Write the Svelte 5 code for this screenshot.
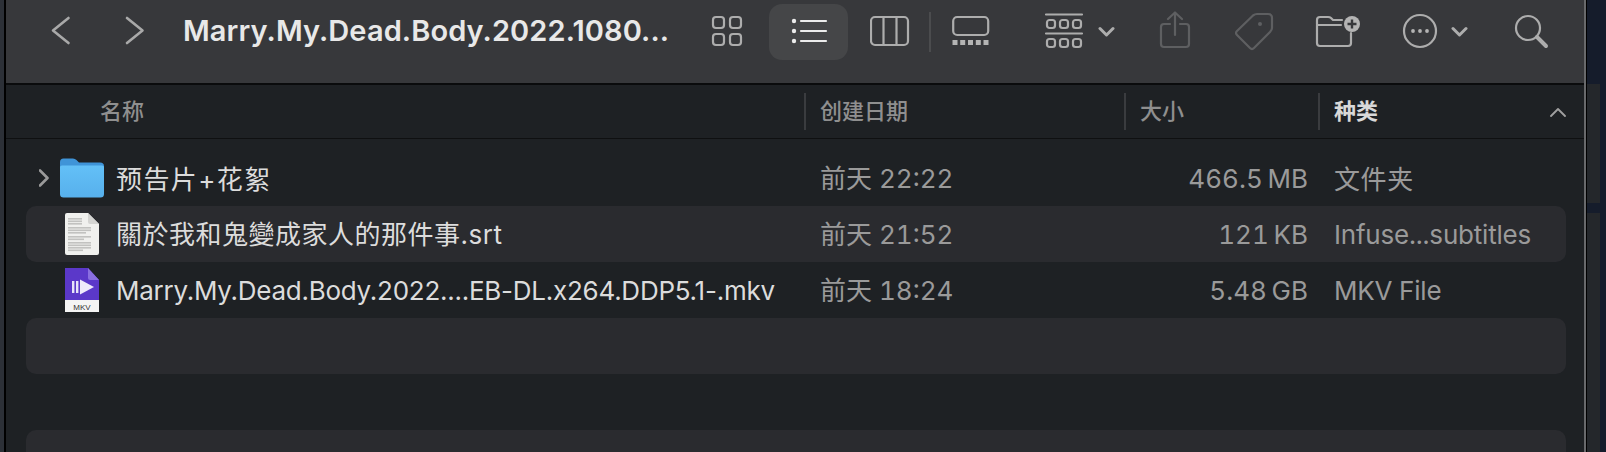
<script>
  const rows = [
    { kind: 'folder', name: '预告片+花絮', date: '前天 22:22', size: '466.5\u2009MB', type: '文件夹', cjk: true, spaced: true },
    { kind: 'doc', name: '關於我和鬼變成家人的那件事.srt', date: '前天 21:52', size: '121\u2009KB', type: 'Infuse...subtitles', tc: true },
    { kind: 'mkv', name: 'Marry.My.Dead.Body.2022....EB-DL.x264.DDP5.1-.mkv', date: '前天 18:24', size: '5.48\u2009GB', type: 'MKV File', latin: true },
    { kind: '' },
    { kind: '' },
    { kind: '' }
  ];
  const docLines = [
    [8, 6, 14], [8, 8.5, 14], [8, 11, 14],
    [8, 15, 23], [8, 17.5, 23], [8, 20, 18],
    [8, 24, 23], [8, 26.5, 16],
    [8, 30, 23], [8, 32.5, 23], [8, 35, 23], [8, 37.5, 15]
  ];
</script>

<div class="stage">
  <div class="rail-left"></div>
  <div class="window">
    <div class="toolbar">
      <svg class="back" width="22" height="40" viewBox="0 0 22 40"><path class="s nav" d="M18.5 7 L3 19.5 L18.5 32" /></svg>
      <svg class="forward" width="22" height="40" viewBox="0 0 22 40"><path class="s nav" d="M3 7 L18.5 19.5 L3 32" /></svg>
      <div class="title">Marry.My.Dead.Body.2022.1080...</div>

      <svg class="i-grid" width="32" height="40" viewBox="0 0 32 40">
        <rect class="s" x="2" y="6" width="11" height="11" rx="3" />
        <rect class="s" x="19" y="6" width="11" height="11" rx="3" />
        <rect class="s" x="2" y="23" width="11" height="11" rx="3" />
        <rect class="s" x="19" y="23" width="11" height="11" rx="3" />
      </svg>

      <div class="list-btn">
        <svg width="79" height="40" viewBox="0 0 79 40">
          <circle class="on-fill" cx="25" cy="10" r="2.2" />
          <circle class="on-fill" cx="25" cy="20" r="2.2" />
          <circle class="on-fill" cx="25" cy="30" r="2.2" />
          <path class="s on" d="M32 10 H57 M32 20 H57 M32 30 H57" />
        </svg>
      </div>

      <svg class="i-col" width="40" height="40" viewBox="0 0 40 40">
        <rect class="s" x="1" y="6" width="37" height="28" rx="4" />
        <path class="s" d="M13.5 6 V34 M26.5 6 V34" />
      </svg>
      <div class="tb-div"></div>
      <svg class="i-gal" width="40" height="40" viewBox="0 0 40 40">
        <rect class="s" x="1.2" y="6" width="35" height="18" rx="4" />
        <g class="fill">
          <rect x="0.5" y="29" width="5" height="5" />
          <rect x="8.2" y="29" width="5" height="5" />
          <rect x="16" y="29" width="5" height="5" />
          <rect x="23.8" y="29" width="5" height="5" />
          <rect x="31.5" y="29" width="5" height="5" />
        </g>
      </svg>
      <svg class="i-group" width="40" height="40" viewBox="0 0 40 40">
        <path class="s" d="M2 3.5 H38 M2 22.5 H38" />
        <rect class="s" x="3" y="9" width="8" height="8" rx="2.5" />
        <rect class="s" x="16" y="9" width="8" height="8" rx="2.5" />
        <rect class="s" x="29" y="9" width="8" height="8" rx="2.5" />
        <rect class="s" x="3" y="28" width="8" height="8" rx="2.5" />
        <rect class="s" x="16" y="28" width="8" height="8" rx="2.5" />
        <rect class="s" x="29" y="28" width="8" height="8" rx="2.5" />
      </svg>
      <svg class="i-chev1" width="18" height="40" viewBox="0 0 18 40"><path class="s thick" d="M2 17.5 L8.5 24 L15 17.5" /></svg>
      <svg class="i-share" width="34" height="40" viewBox="0 0 34 40">
        <path class="s off" d="M12 13 H6 a3 3 0 0 0 -3 3 V33 a3 3 0 0 0 3 3 H28 a3 3 0 0 0 3 -3 V16 a3 3 0 0 0 -3 -3 H22" />
        <path class="s off" d="M17 24 V2 M10 8 L17 1.5 L24 8" />
      </svg>
      <svg class="i-tag" width="40" height="40" viewBox="0 0 40 40">
        <path class="s off" d="M3 20 L19 4.5 Q21 3 23 3 L34 3 Q38 3 38 7 L38 17 Q38 19 36 21 L20 37 Q18 39 16 37 L3 24 Q1 22 3 20 Z" />
        <circle class="off-fill" cx="26" cy="13" r="2" />
      </svg>
      <svg class="i-new" width="47" height="40" viewBox="0 0 47 40">
        <path class="s" d="M2 14 V9 a3 3 0 0 1 3 -3 H13 q2 0 3 1 l2 2 H27 M2 14 H26 M2 14 V32 a3 3 0 0 0 3 3 H33 a3 3 0 0 0 3 -3 V22" />
        <circle class="fill" cx="37" cy="13" r="8" />
        <path class="plus" d="M37 8.5 V17.5 M32.5 13 H41.5" />
      </svg>
      <svg class="i-more" width="36" height="40" viewBox="0 0 36 40">
        <circle class="s" cx="18" cy="20" r="16" />
        <g class="fill">
          <circle cx="11" cy="20" r="1.9" />
          <circle cx="18" cy="20" r="1.9" />
          <circle cx="25" cy="20" r="1.9" />
        </g>
      </svg>
      <svg class="i-chev2" width="18" height="40" viewBox="0 0 18 40"><path class="s thick" d="M2 17.5 L8.5 24 L15 17.5" /></svg>
      <svg class="i-search" width="36" height="40" viewBox="0 0 36 40">
        <circle class="s" cx="14" cy="17" r="12" />
        <path class="s thick2" d="M23 26 L32 35" />
      </svg>
    </div>

    <div class="head">
      <div class="hc name"><span>名称</span></div>
      <div class="hc date"><span>创建日期</span></div>
      <div class="hc size"><span>大小</span></div>
      <div class="hc type">
        <span>种类</span>
        <svg width="16" height="10" viewBox="0 0 16 10"><path class="caret" d="M1 9 L8 2 L15 9" /></svg>
      </div>
    </div>

    <div class="list">
      {#each rows as r, i}
        <div class="row" class:stripe={i % 2 === 1}>
          {#if r.kind}
            <div class="cell-name">
              <div class="disc">
                {#if r.kind === 'folder'}
                  <svg width="10" height="18" viewBox="0 0 10 18"><path class="disc-s" d="M1 1.5 L8.5 9 L1 16.5" /></svg>
                {/if}
              </div>
              <svg class="ficon" width="44" height="44" viewBox="0 0 44 44">
                {#if r.kind === 'folder'}
                  <defs>
                    <linearGradient id="fg" x1="0" y1="0" x2="0" y2="1">
                      <stop offset="0" stop-color="#63c0f7" />
                      <stop offset="1" stop-color="#57b0ec" />
                    </linearGradient>
                  </defs>
                  <path d="M0 6 Q0 2.5 3.5 2.5 H13 Q15 2.5 16.5 4 L19 6.5 H40 Q44 6.5 44 10 V20 H0 Z" fill="#3f94d8" />
                  <path d="M0 11 Q0 9.5 2 9.5 H42 Q44 9.5 44 11 V38 Q44 41.5 40.5 41.5 H3.5 Q0 41.5 0 38 Z" fill="url(#fg)" />
                {:else if r.kind === 'doc'}
                  <path d="M7 1 H28 L39 12 V41 Q39 43 37 43 H7 Q5 43 5 41 V3 Q5 1 7 1 Z" fill="#f0f0ee" />
                  <path d="M28 1 L39 12 H30 Q28 12 28 10 Z" fill="#d4d4d2" />
                  {#each docLines as l}
                    <rect x={l[0]} y={l[1]} width={l[2]} height="1.6" fill="#c2c2c0" />
                  {/each}
                {:else}
                  <path d="M5 0 H28 L39 12 V32 H5 Z" fill="#5b38c9" />
                  <path d="M28 0 L39 12 H30 Q28 12 28 10 Z" fill="#8a6fe0" />
                  <rect x="5" y="32" width="34" height="12" fill="#f4f4f4" />
                  <rect x="12" y="13" width="2.4" height="12" fill="#e8e4f8" />
                  <rect x="16" y="13" width="2.4" height="12" fill="#e8e4f8" />
                  <path d="M20 11.5 L34 19 L20 26.5 Z" fill="#efeafb" />
                  <text x="22" y="41.5" class="mkv">MKV</text>
                {/if}
              </svg>
              <span class="fname" class:tc={r.tc} class:spaced={r.spaced} class:latin={r.latin}>{r.name}</span>
            </div>
            <div class="cell date-c">{r.date}</div>
            <div class="cell size-c">{r.size}</div>
            <div class="cell type-c" class:type-cjk={r.cjk}>{r.type}</div>
          {/if}
        </div>
      {/each}
    </div>
  </div>
  <div class="rail-right">
    <div class="rr-a"></div>
    <div class="rr-b"></div>
  </div>
</div>

<style>
  :global(body) { margin: 0; background: #151c2b; }
  .stage {
    display: flex;
    width: 1606px;
    height: 452px;
    overflow: hidden;
    font-family: Inter, "Noto Sans CJK SC", sans-serif;
  }
  .rail-left { width: 4px; background: #2c3037; flex: none; }
  .window {
    flex: none;
    width: 1578px;
    border-left: 2px solid #000;
    background: #1e2124;
    display: flex;
    flex-direction: column;
  }
  .toolbar {
    height: 72px;
    flex: none;
    background: #37383b;
    border-bottom: 2px solid #0a0b0c;
    display: flex;
    align-items: flex-start;
    padding-left: 44px;
    padding-top: 11px;
  }
  .toolbar svg { flex: none; display: block; }
  .s { fill: none; stroke: #adadad; stroke-width: 2.2; stroke-linecap: round; stroke-linejoin: round; }
  .nav { stroke-width: 2.6; stroke: #a9a9a9; }
  .on { stroke: #ececec; }
  .on-fill { fill: #ececec; }
  .off { stroke: #5e5f61; }
  .off-fill { fill: #5e5f61; }
  .fill { fill: #b4b4b4; }
  .thick { stroke-width: 3; }
  .thick2 { stroke-width: 4; }
  .plus { stroke: #37383b; stroke-width: 2.4; fill: none; }
  .forward { margin-left: 52px; }
  .title {
    margin-left: 37px;
    width: 528px;
    flex: none;
    color: #e8e8e8;
    font-size: 29px;
    font-weight: 600;
    letter-spacing: 0.1px;
    line-height: 40px;
    white-space: nowrap;
  }
  .list-btn {
    margin-left: 26px;
    margin-top: -7px;
    width: 79px;
    height: 56px;
    border-radius: 13px;
    background: #454648;
    flex: none;
    padding-top: 7px;
    box-sizing: border-box;
  }
  .i-col { margin-left: 22px; }
  .tb-div { margin-left: 19px; width: 2px; height: 40px; margin-top: 1px; background: #4b4c4e; flex: none; }
  .i-gal { margin-left: 21px; }
  .i-group { margin-left: 52px; }
  .i-chev1 { margin-left: 14px; }
  .i-share { margin-left: 42px; }
  .i-tag { margin-left: 42px; }
  .i-new { margin-left: 41px; }
  .i-more { margin-left: 40px; }
  .i-chev2 { margin-left: 13px; }
  .i-search { margin-left: 45px; }

  .head {
    flex: none;
    height: 53px;
    display: grid;
    grid-template-columns: 798px 320px 194px 266px;
    align-items: center;
    border-bottom: 1px solid #0f1011;
    color: #8f8f8f;
    font-size: 22px;
    font-weight: 500;
  }
  .hc { height: 37px; display: flex; align-items: center; box-sizing: border-box; }
  .hc span { margin-top: -6px; }
  .name { padding-left: 94px; }
  .date, .size, .type { border-left: 2px solid #3a3c3f; padding-left: 14px; }
  .type { color: #d8d8d8; font-weight: 700; justify-content: space-between; padding-right: 18px; }
  .caret { fill: none; stroke: #a0a0a0; stroke-width: 1.8; stroke-linecap: round; stroke-linejoin: round; }

  .list { padding: 11px 18px 0 20px; }
  .row {
    height: 56px;
    display: grid;
    grid-template-columns: 778px 320px 194px 248px;
    align-items: center;
    border-radius: 10px;
    font-size: 26px;
  }
  .stripe { background: #2a2b2f; }
  .cell-name { display: flex; align-items: center; min-width: 0; }
  .disc { width: 34px; flex: none; padding-left: 13px; box-sizing: border-box; display: flex; }
  .disc-s { fill: none; stroke: #9a9a9a; stroke-width: 2.6; stroke-linecap: round; stroke-linejoin: round; }
  .ficon { flex: none; display: block; }
  .fname { margin-left: 12px; color: #dcdcdc; white-space: nowrap; letter-spacing: -0.25px; margin-top: -2px; }
  .tc { font-family: Inter, "Noto Sans CJK TC", sans-serif; letter-spacing: 0.5px; margin-top: -4px; }
  .spaced { letter-spacing: 1.4px; }
  .latin { margin-top: 0; }
  .cell { color: #9a9a9a; white-space: nowrap; margin-top: 0; font-variant-numeric: tabular-nums; }
  .date-c { padding-left: 16px; margin-top: -3px; }
  .size-c { text-align: right; padding-right: 10px; }
  .type-c { padding-left: 16px; letter-spacing: -0.2px; }
  .type-cjk { margin-top: -2px; letter-spacing: 0.6px; }
  .mkv { font: 500 8px "Liberation Sans", sans-serif; fill: #333; text-anchor: middle; }

  .rail-right {
    flex: none;
    width: 22px;
    border-left: 2px solid #68696b;
    box-sizing: border-box;
    background: #151c2b;
    box-shadow: inset 1px 0 0 #000;
    display: flex;
    flex-direction: column;
    padding: 84px 6px 0 1px;
    gap: 10px;
  }
  .rr-a { height: 119px; background: #24272b; flex: none; }
  .rr-b { flex: 1; background: #24272b; }
</style>
